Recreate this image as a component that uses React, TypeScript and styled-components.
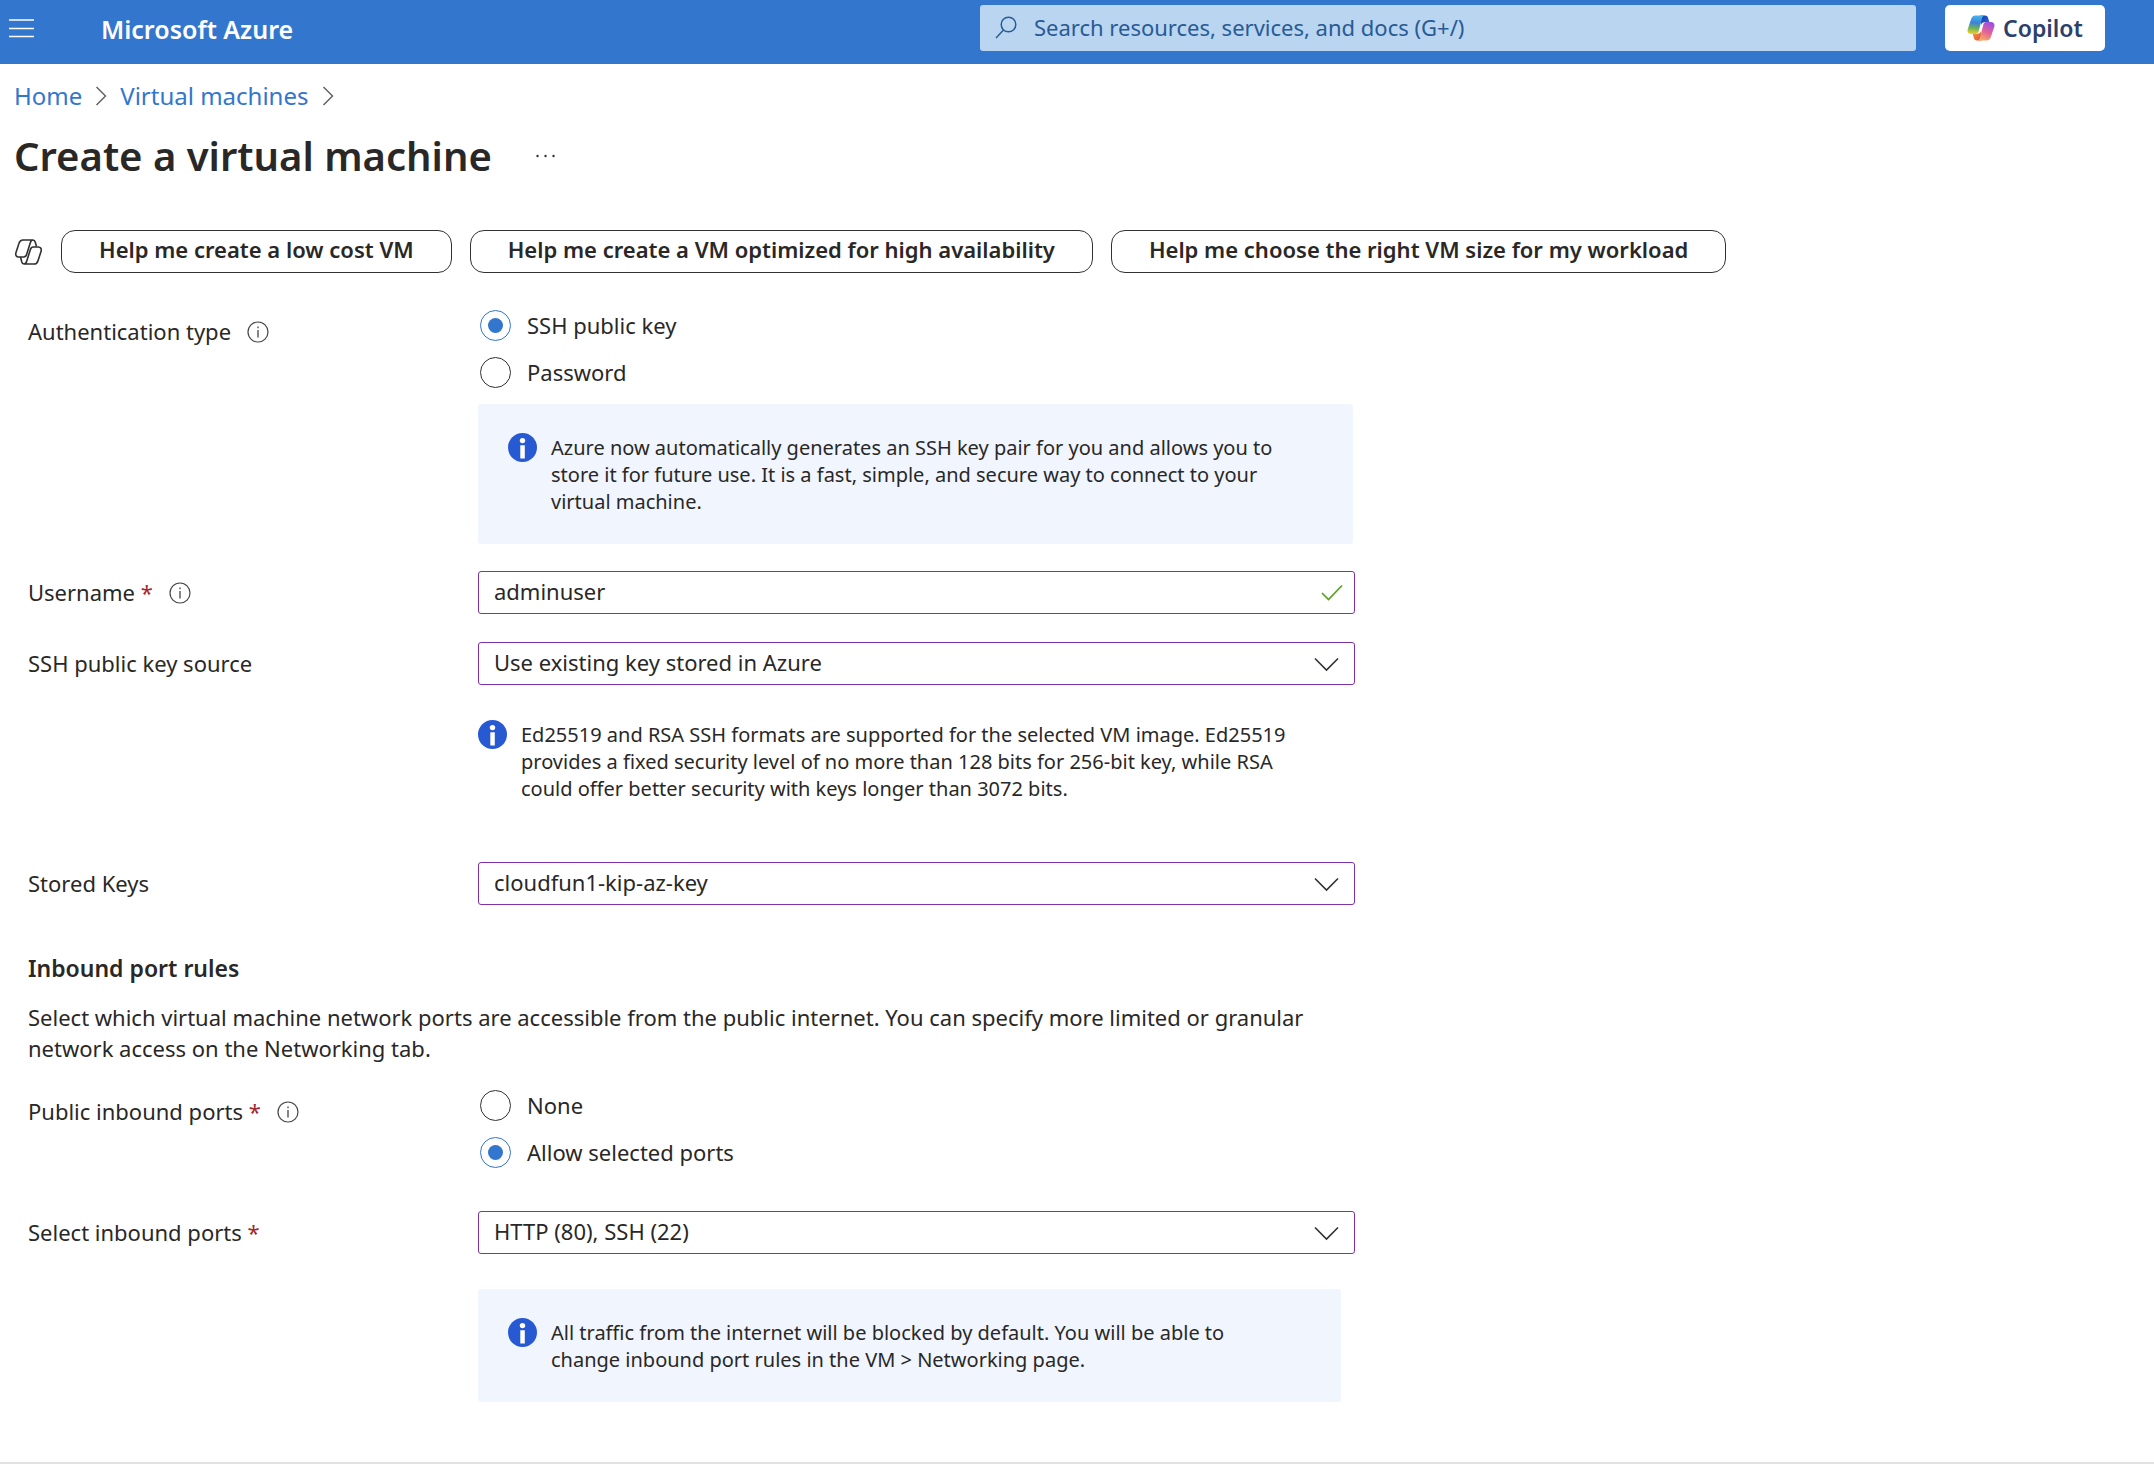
import React, { useId, useState } from "react";
import styled, { createGlobalStyle } from "styled-components";

const GlobalStyle = createGlobalStyle`
  *, *::before, *::after { box-sizing: border-box; }
  body {
    margin: 0;
    background: #fff;
    color: #292827;
    font-family: "Noto Sans", "Open Sans", sans-serif;
    font-size: 22px;
    line-height: 31px;
  }
  button, input, select { font: inherit; color: inherit; margin: 0; }
`;

const TopBar = styled.header`
  display: flex;
  align-items: flex-start;
  height: 64px;
  padding: 5px 49px 0 8px;
  background: #3376cd;
`;

const MenuButton = styled.button`
  display: flex;
  align-items: center;
  height: 46px;
  padding: 0;
  border: 0;
  background: none;
`;

const Brand = styled.a`
  flex: 1;
  margin-left: 66px;
  color: #fff;
  font-size: 25px;
  font-weight: 600;
  line-height: 48px;
  text-decoration: none;
  white-space: nowrap;
`;

const SearchBox = styled.label`
  display: flex;
  align-items: center;
  gap: 17px;
  flex: 0 1 936px;
  height: 46px;
  padding: 0 15px;
  border-radius: 3px;
  background: #b9d5ef;
  color: #285a96;
`;

const SearchInput = styled.input`
  flex: 1;
  min-width: 0;
  padding: 0 0 1px;
  border: 0;
  outline: 0;
  background: none;
  &::placeholder { color: #285a96; opacity: 1; }
`;

const CopilotButton = styled.button`
  display: flex;
  align-items: center;
  justify-content: center;
  gap: 8px;
  width: 160px;
  height: 46px;
  margin-left: 29px;
  padding: 0;
  border: 0;
  border-radius: 5px;
  background: #fff;
  color: #2b406b;
  font-size: 23px;
  font-weight: 600;
`;

const Breadcrumbs = styled.nav`
  display: flex;
  align-items: center;
  gap: 13px;
  padding: 16px 14px 0;
  font-size: 24px;
  line-height: 32px;
  color: #605e5c;
`;

const Crumb = styled.a`
  color: #3376cd;
  text-decoration: none;
`;

const TitleRow = styled.div`
  display: flex;
  align-items: center;
  gap: 43px;
  padding: 14px 14px 0;
`;

const Title = styled.h1`
  margin: 0;
  font-size: 40px;
  font-weight: 600;
  line-height: 60px;
`;

const MoreButton = styled.button`
  display: flex;
  padding: 0;
  border: 0;
  background: none;
`;

const Suggestions = styled.div`
  display: flex;
  align-items: center;
  flex-wrap: wrap;
  gap: 18px;
  padding: 44px 14px 0;
`;

const Suggestion = styled.button`
  height: 43px;
  padding: 0 37px 4px;
  border: 1px solid #323130;
  border-radius: 14px;
  background: #fff;
  font-weight: 600;
  white-space: nowrap;
`;

const Form = styled.form`
  max-width: 1355px;
  padding: 37px 0 0 28px;
`;

const Row = styled.div<{ $gap?: number }>`
  display: grid;
  grid-template-columns: 450px minmax(0, 1fr);
  margin-top: ${(p) => p.$gap ?? 0}px;
`;

const LabelCell = styled.div`
  display: flex;
  align-items: center;
  align-self: start;
  height: 31px;
  margin-top: 6px;
  white-space: pre;
`;

const Required = styled.span`
  color: #a4262c;
`;

const HintButton = styled.button`
  display: flex;
  margin-left: 16px;
  padding: 0;
  border: 0;
  background: none;
`;

const RadioGroup = styled.div`
  display: flex;
  flex-direction: column;
  gap: 16px;
  padding-left: 2px;
`;

const RadioLabel = styled.label`
  display: flex;
  align-items: center;
  align-self: flex-start;
  gap: 16px;
`;

const RadioInput = styled.input`
  appearance: none;
  display: grid;
  place-items: center;
  width: 31px;
  height: 31px;
  border: 1px solid #323130;
  border-radius: 50%;
  &:checked { border-color: #3376cd; }
  &:checked::before {
    content: "";
    width: 15px;
    height: 15px;
    border-radius: 50%;
    background: #3376cd;
  }
`;

const Field = styled.div`
  display: grid;
  align-items: center;
  height: 43px;
  > * { grid-area: 1 / 1; }
  > svg { justify-self: end; pointer-events: none; }
`;

const TextInput = styled.input`
  width: 100%;
  height: 43px;
  padding: 0 48px 3px 15px;
  border: 1px solid #8230a6;
  border-radius: 3px;
  outline: 0;
  background: #fff;
`;

const Select = styled.select`
  appearance: none;
  width: 100%;
  height: 43px;
  padding: 0 48px 2px 15px;
  border: 1px solid #8230a6;
  border-radius: 3px;
  background: #fff;
`;

const Notice = styled.div<{ $boxed?: boolean; $inset?: number }>`
  display: flex;
  align-items: flex-start;
  gap: 14px;
  margin-right: ${(p) => p.$inset ?? 0}px;
  padding: ${(p) => (p.$boxed ? "29px 60px 29px 30px" : "0 50px 0 0")};
  border-radius: 3px;
  background: ${(p) => (p.$boxed ? "#f0f5fe" : "none")};
`;

const NoticeText = styled.p`
  flex: 1;
  margin: 0;
  padding-top: 1px;
  font-size: 20px;
  line-height: 27px;
`;

const SectionTitle = styled.h2`
  margin: 46px 0 0;
  font-size: 23px;
  font-weight: 600;
  line-height: 34px;
`;

const SectionText = styled.p`
  margin: 17px 0 0;
`;

const Divider = styled.hr`
  margin: 60px 0 0;
  border: 0;
  border-top: 2px solid #e1e1e1;
`;

const MenuIcon = () => (
  <svg width="27" height="20" viewBox="0 0 27 20" stroke="#fff" strokeWidth="1.6" aria-hidden="true">
    <path d="M1 2h25M1 10.500h25M1 18.500h25" />
  </svg>
);

const SearchIcon = () => (
  <svg width="22" height="24" viewBox="0 0 22 24" fill="none" stroke="currentColor" strokeWidth="1.5" aria-hidden="true">
    <circle cx="13.500" cy="8.500" r="7.300" />
    <path d="M8.500 14 1 22" />
  </svg>
);

const CrumbChevron = () => (
  <svg width="12" height="20" viewBox="0 0 12 20" fill="none" stroke="currentColor" strokeWidth="1.4" aria-hidden="true">
    <path d="M1.500 1 10.500 10l-9 9" />
  </svg>
);

const DownChevron = () => (
  <svg width="41" height="16" viewBox="0 0 41 16" fill="none" stroke="#323130" strokeWidth="1.600" aria-hidden="true">
    <path d="M1 2.500 12.500 14 24 2.500" />
  </svg>
);

const CheckIcon = () => (
  <svg width="34" height="18" viewBox="0 0 34 18" fill="none" stroke="#5b9f24" strokeWidth="1.700" aria-hidden="true">
    <path d="M1 9 7.500 15.500 21 1.500" />
  </svg>
);

const HintIcon = () => (
  <svg width="22" height="22" viewBox="0 0 22 22" fill="none" stroke="#484644" aria-hidden="true">
    <circle cx="11" cy="11" r="10" strokeWidth="1.200" />
    <path d="M11 9v7.500M11 5.500v1.700" strokeWidth="1.300" />
  </svg>
);

const InfoIcon = () => (
  <svg width="29" height="29" viewBox="0 0 29 29" aria-hidden="true">
    <circle cx="14.500" cy="14.500" r="14.500" fill="#2759d3" />
    <circle cx="14.500" cy="7.600" r="2.700" fill="#fff" />
    <path d="M12.300 12.300h4.500V25.500h-4.500z" fill="#fff" />
  </svg>
);

const DotsIcon = () => (
  <svg width="22" height="6" viewBox="0 0 22 6" fill="#323130" aria-hidden="true">
    <circle cx="2.500" cy="3" r="1.200" />
    <circle cx="10.500" cy="3" r="1.200" />
    <circle cx="18.500" cy="3" r="1.200" />
  </svg>
);

const CopilotOutline = () => (
  <svg width="29" height="26" viewBox="0 0 29 26" fill="none" stroke="#323130" strokeWidth="1.600" strokeLinejoin="round" aria-hidden="true">
    <path d="M19 1H9C6.800 1 5.600 2.200 5 4.300L2 13.500c-.8 2.600.3 4.500 2.700 4.500h5c1.600 0 2.500-1 3-2.700L16.300 3.700C16.900 1.900 17.500 1 19 1c1.300 0 1.900.9 2.300 2.300L22.500 7.500" />
    <path d="M10 25h10c2.200 0 3.400-1.200 4-3.300L27 12.500c.8-2.600-.3-4.500-2.700-4.500h-5c-1.600 0-2.500 1-3 2.700L12.700 22.300C12.100 24.100 11.500 25 10 25c-1.300 0-1.900-.9-2.300-2.300L6.500 18" />
  </svg>
);

const CopilotLogo = () => (
  <svg width="28" height="26" viewBox="0 0 28 26" aria-hidden="true">
    <defs>
      <linearGradient id="cpLeft" x1="0.500" y1="0" x2="0.400" y2="1">
        <stop offset="0" stopColor="#45b4f0" />
        <stop offset="0.400" stopColor="#3b82d8" />
        <stop offset="0.700" stopColor="#6fb557" />
        <stop offset="1" stopColor="#f3cf2e" />
      </linearGradient>
      <linearGradient id="cpRight" x1="0.700" y1="0" x2="0.300" y2="1">
        <stop offset="0" stopColor="#9b4fe6" />
        <stop offset="0.500" stopColor="#e0609a" />
        <stop offset="1" stopColor="#f7ac62" />
      </linearGradient>
      <linearGradient id="cpTop" x1="0" y1="0" x2="1" y2="0.600">
        <stop offset="0" stopColor="#1b38a8" />
        <stop offset="1" stopColor="#2564cf" />
      </linearGradient>
      <linearGradient id="cpBottom" x1="0" y1="0" x2="1" y2="1">
        <stop offset="0" stopColor="#f5a33c" />
        <stop offset="1" stopColor="#dc4a42" />
      </linearGradient>
    </defs>
    <path d="M13.500.5H18c1.900 0 2.700 1 3.200 2.700l1.200 4.100h-5c-1.800 0-2.700 1-3.200 2.700z" fill="url(#cpTop)" />
    <path d="M14.500 25.500H10c-1.900 0-2.700-1-3.200-2.700l-1.200-4.100h5c1.800 0 2.700-1 3.200-2.700z" fill="url(#cpBottom)" />
    <path d="M17.500.5H8.600C6 .5 4.800 2 4 4.500L.8 14c-.9 2.900.4 5 3.200 5h4.500c1.800 0 2.700-1 3.200-2.700L15 3.500c.5-1.800 1.200-2.700 2.500-3z" fill="url(#cpLeft)" />
    <path d="M10.500 25.500h8.900c2.600 0 3.800-1.500 4.600-4L27.200 12c.9-2.900-.4-5-3.200-5h-4.500c-1.800 0-2.700 1-3.200 2.700L13 22.500c-.5 1.800-1.200 2.700-2.500 3z" fill="url(#cpRight)" />
  </svg>
);

const Hint = ({ topic }: { topic: string }) => (
  <HintButton type="button" aria-label={`About ${topic}`}>
    <HintIcon />
  </HintButton>
);

type RadioOptionsProps = { name: string; options: string[]; initial: string; label: string };

function RadioOptions({ name, options, initial, label }: RadioOptionsProps) {
  const [value, setValue] = useState(initial);
  return (
    <RadioGroup role="radiogroup" aria-label={label}>
      {options.map((option) => (
        <RadioLabel key={option}>
          <RadioInput type="radio" name={name} checked={value === option} onChange={() => setValue(option)} />
          {option}
        </RadioLabel>
      ))}
    </RadioGroup>
  );
}

type SelectRowProps = { label: string; value: string; required?: boolean; gap: number };

function SelectRow({ label, value, required, gap }: SelectRowProps) {
  const id = useId();
  return (
    <Row $gap={gap}>
      <LabelCell>
        <label htmlFor={id}>{label}</label>
        {required && <Required> *</Required>}
      </LabelCell>
      <Field>
        <Select id={id} defaultValue={value}>
          <option>{value}</option>
        </Select>
        <DownChevron />
      </Field>
    </Row>
  );
}

type InfoProps = { children: React.ReactNode; boxed?: boolean; inset?: number };

const Info = ({ children, boxed, inset }: InfoProps) => (
  <Notice $boxed={boxed} $inset={inset}>
    <InfoIcon />
    <NoticeText>{children}</NoticeText>
  </Notice>
);

const suggestions = [
  "Help me create a low cost VM",
  "Help me create a VM optimized for high availability",
  "Help me choose the right VM size for my workload",
];

export default function App() {
  return (
    <>
      <GlobalStyle />
      <TopBar>
        <MenuButton aria-label="Show portal menu"><MenuIcon /></MenuButton>
        <Brand href="#home">Microsoft Azure</Brand>
        <SearchBox>
          <SearchIcon />
          <SearchInput type="text" aria-label="Search" placeholder="Search resources, services, and docs (G+/)" />
        </SearchBox>
        <CopilotButton><CopilotLogo />Copilot</CopilotButton>
      </TopBar>
      <Breadcrumbs aria-label="Breadcrumb">
        <Crumb href="#home">Home</Crumb>
        <CrumbChevron />
        <Crumb href="#vms">Virtual machines</Crumb>
        <CrumbChevron />
      </Breadcrumbs>
      <main>
        <TitleRow>
          <Title>Create a virtual machine</Title>
          <MoreButton aria-label="More"><DotsIcon /></MoreButton>
        </TitleRow>
        <Suggestions>
          <CopilotOutline />
          {suggestions.map((text) => <Suggestion key={text}>{text}</Suggestion>)}
        </Suggestions>
        <Form>
          <Row>
            <LabelCell>Authentication type<Hint topic="authentication type" /></LabelCell>
            <RadioOptions name="auth" label="Authentication type" options={["SSH public key", "Password"]} initial="SSH public key" />
          </Row>
          <Row $gap={16}>
            <span />
            <Info boxed inset={2}>
              Azure now automatically generates an SSH key pair for you and allows you to
              store it for future use. It is a fast, simple, and secure way to connect to your
              virtual machine.
            </Info>
          </Row>
          <Row $gap={27}>
            <LabelCell>
              <label htmlFor="username">Username</label>
              <Required> *</Required>
              <Hint topic="username" />
            </LabelCell>
            <Field>
              <TextInput id="username" type="text" defaultValue="adminuser" />
              <CheckIcon />
            </Field>
          </Row>
          <SelectRow gap={28} label="SSH public key source" value="Use existing key stored in Azure" />
          <Row $gap={35}>
            <span />
            <Info>
              Ed25519 and RSA SSH formats are supported for the selected VM image. Ed25519
              provides a fixed security level of no more than 128 bits for 256-bit key, while RSA
              could offer better security with keys longer than 3072 bits.
            </Info>
          </Row>
          <SelectRow gap={60} label="Stored Keys" value="cloudfun1-kip-az-key" />
          <SectionTitle>Inbound port rules</SectionTitle>
          <SectionText>
            Select which virtual machine network ports are accessible from the public internet. You can specify more limited or granular
            network access on the Networking tab.
          </SectionText>
          <Row $gap={26}>
            <LabelCell>
              Public inbound ports
              <Required> *</Required>
              <Hint topic="public inbound ports" />
            </LabelCell>
            <RadioOptions name="ports" label="Public inbound ports" options={["None", "Allow selected ports"]} initial="Allow selected ports" />
          </Row>
          <SelectRow gap={43} label="Select inbound ports" required value="HTTP (80), SSH (22)" />
          <Row $gap={35}>
            <span />
            <Info boxed inset={14}>
              All traffic from the internet will be blocked by default. You will be able to
              change inbound port rules in the VM &gt; Networking page.
            </Info>
          </Row>
        </Form>
        <Divider />
      </main>
    </>
  );
}
